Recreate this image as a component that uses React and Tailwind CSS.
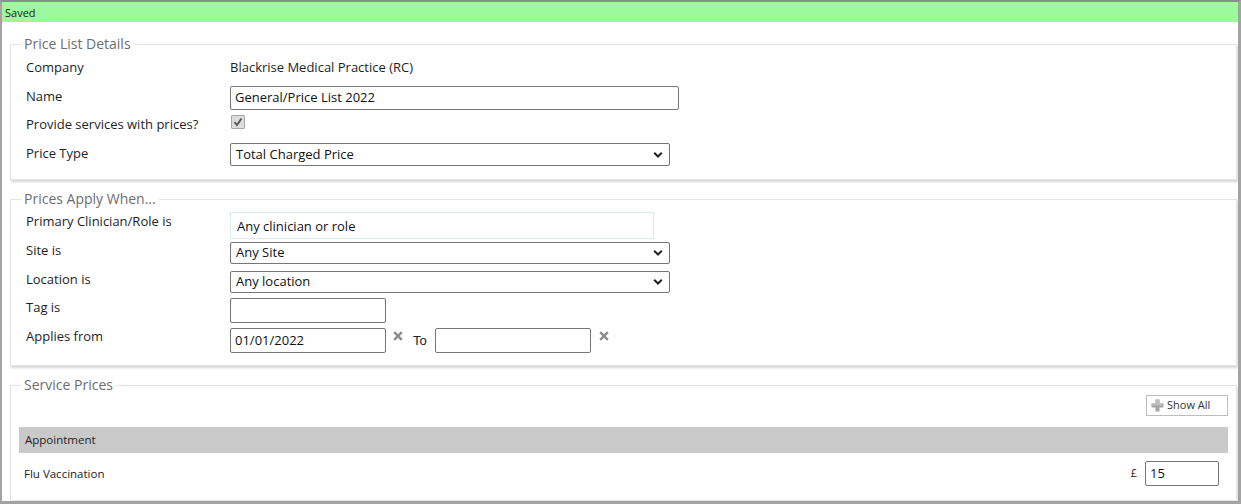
import React from "react";

const F = "font-['Open_Sans',sans-serif]";

function Chevron() {
  return (
    <svg width="10" height="7" viewBox="0 0 10 7" className="absolute right-[6px] top-1/2 -translate-y-1/2">
      <path d="M1.2 1.2 L5 5 L8.8 1.2" fill="none" stroke="#222" strokeWidth="2" />
    </svg>
  );
}

function Select({ value, h = "h-[23px]" }) {
  return (
    <div className={"relative w-[440px] border border-[#767676] rounded-[2px] bg-white flex items-center pl-[5px] text-[13px] text-[#111] " + h}>
      {value}
      <Chevron />
    </div>
  );
}

function XIcon() {
  return (
    <svg width="10" height="10" viewBox="0 0 10 10">
      <path d="M1.2 1.2 L8.8 8.8 M8.8 1.2 L1.2 8.8" stroke="#8c8c8c" strokeWidth="2.4" />
    </svg>
  );
}

function Label({ children }) {
  return <div className="w-[204px] shrink-0 leading-[18px] text-[13px] text-[#1e1e1e]">{children}</div>;
}

function Fieldset({ legend, children }) {
  return (
    <fieldset className="w-[1227px] border border-[#e4e4e4] bg-white shadow-[1px_2px_2px_rgba(0,0,0,0.16)]">
      <legend className="ml-[10px] px-[3px] text-[14px] leading-[18px] text-[#6e6e6e]">{legend}</legend>
      {children}
    </fieldset>
  );
}

export default function App() {
  return (
    <div className={"w-[1241px] h-[504px] bg-white border-t-2 border-t-[#8c8c8c] border-l-2 border-l-[#a3a3a3] border-r-[3px] border-r-[#a3a3a3] border-b-[3px] border-b-[#a3a3a3] overflow-hidden " + F}>
      <div className="h-[20px] bg-[#9cf99c] flex items-center pl-[3px] pt-[3px] text-[11px] text-[#222]">Saved</div>
      <div className="pl-[8px] pt-[13px] flex flex-col gap-[10px]">
        <Fieldset legend="Price List Details">
          <div className="pl-[15px] pb-[13px]">
            <div className="flex items-start mt-[5px]">
              <Label>Company</Label>
              <div className="leading-[18px] text-[13px] text-[#1e1e1e]">Blackrise Medical Practice (RC)</div>
            </div>
            <div className="flex items-start mt-[10px]">
              <div className="pt-[1px]"><Label>Name</Label></div>
              <div className="w-[449px] h-[24px] border border-[#767676] rounded-[2px] flex items-center pl-[4px] text-[13px] text-[#111]">General/Price List 2022</div>
            </div>
            <div className="flex items-start mt-[5px]">
              <Label>Provide services with prices?</Label>
              <div className="w-[14px] h-[14px] ml-[1px] border border-[#a8a8a8] bg-[#dcdcdc] rounded-[1px] flex items-center justify-center">
                <svg width="10" height="10" viewBox="0 0 10 10">
                  <path d="M1.5 5.2 L4 8 L8.5 1.5" fill="none" stroke="#555" strokeWidth="1.8" />
                </svg>
              </div>
            </div>
            <div className="flex items-start mt-[10px]">
              <div className="pt-[1px]"><Label>Price Type</Label></div>
              <Select value="Total Charged Price" />
            </div>
          </div>
        </Fieldset>

        <Fieldset legend="Prices Apply When...">
          <div className="pl-[15px] pb-[12px]">
            <div className="flex items-start mt-[4px]">
              <Label>Primary Clinician/Role is</Label>
              <div className="w-[424px] h-[27px] border border-[#dfe9ee] flex items-end pb-[2px] pl-[6px] text-[13px] text-[#111]">Any clinician or role</div>
            </div>
            <div className="flex items-start mt-[3px]">
              <div className="-mt-[1px]"><Label>Site is</Label></div>
              <Select value="Any Site" h="h-[22px]" />
            </div>
            <div className="flex items-start mt-[7px]">
              <div className="-mt-[1px]"><Label>Location is</Label></div>
              <Select value="Any location" h="h-[22px]" />
            </div>
            <div className="flex items-start mt-[5px]">
              <Label>Tag is</Label>
              <div className="w-[156px] h-[25px] border border-[#767676] rounded-[2px]" />
            </div>
            <div className="flex items-start mt-[5px]">
              <div className="-mt-[1px]"><Label>Applies from</Label></div>
              <div className="w-[156px] h-[25px] border border-[#767676] rounded-[2px] flex items-center pl-[4px] text-[13px] text-[#111]">01/01/2022</div>
              <div className="ml-[7px] mt-[3px]"><XIcon /></div>
              <div className="ml-[10px] mt-[5px] text-[13px] leading-[16px] text-[#222] font-['Liberation_Sans',sans-serif]">To</div>
              <div className="ml-[8px] w-[156px] h-[25px] border border-[#767676] rounded-[2px]" />
              <div className="ml-[8px] mt-[3px]"><XIcon /></div>
            </div>
          </div>
        </Fieldset>

        <Fieldset legend="Service Prices">
          <div className="pb-[14px]">
            <div className="flex justify-end pr-[8px] mt-[1px]">
              <div className="w-[82px] h-[21px] border border-[#bdbdbd] bg-white flex items-center pl-[4px] gap-[3px] text-[11px] text-[#333]">
                <svg width="13" height="13" viewBox="0 0 13 13">
                  <path d="M4.5 0.5 H8.5 V4.5 H12.5 V8.5 H8.5 V12.5 H4.5 V8.5 H0.5 V4.5 H4.5 Z" fill="#a5a5a5" />
                  <path d="M4.5 0.5 H8.5 V4.5 H12.5 V6.5 H0.5 V4.5 H4.5 Z" fill="#bdbdbd" />
                </svg>
                Show All
              </div>
            </div>
            <div className="mt-[11px] mx-[8px] h-[26px] bg-[#c9c9c9] flex items-center pl-[6px] text-[11.5px] text-[#222]">Appointment</div>
            <div className="mt-[8px] flex items-center pl-[13px] pr-[17px] h-[25px]">
              <div className="flex-1 text-[11.5px] text-[#222]">Flu Vaccination</div>
              <div className="text-[11px] text-[#222] mr-[8px]">£</div>
              <div className="w-[74px] h-[25px] border border-[#767676] rounded-[2px] flex items-center pl-[4px] text-[13px] text-[#111]">15</div>
            </div>
          </div>
        </Fieldset>
      </div>
    </div>
  );
}
